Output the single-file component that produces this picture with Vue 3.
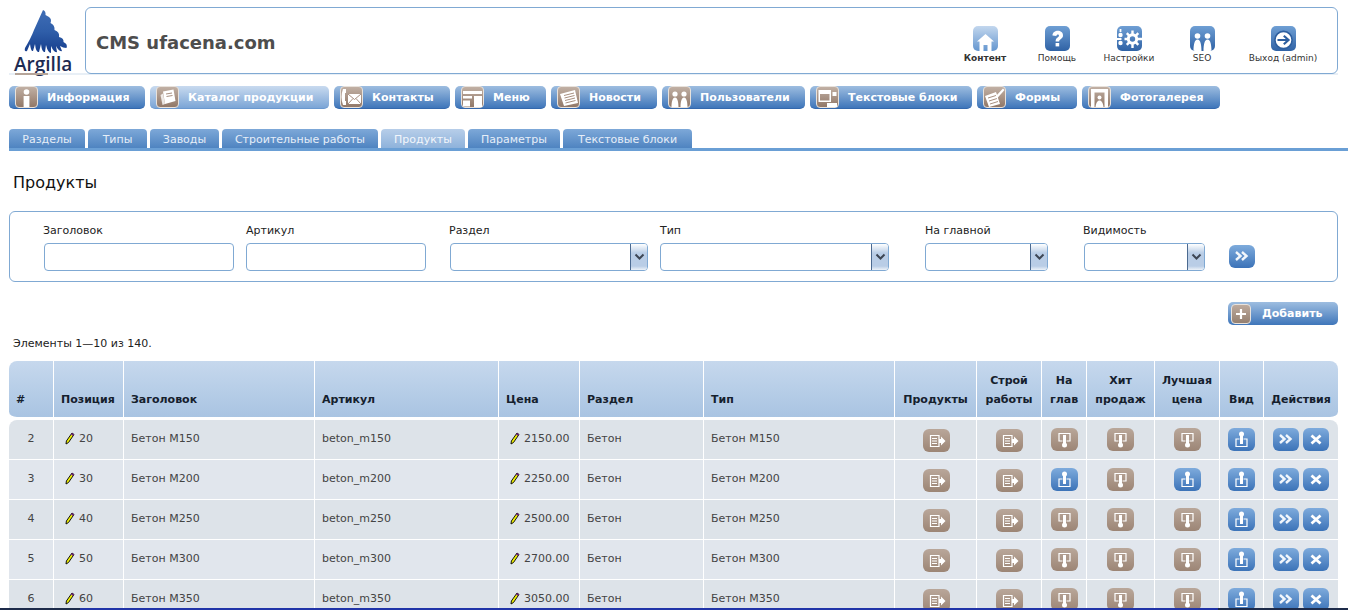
<script setup>
const topLinks = [
  { label: 'Контент', icon: 'home', w: 72, active: true },
  { label: 'Помощь', icon: 'help', w: 72 },
  { label: 'Настройки', icon: 'gears', w: 72 },
  { label: 'SEO', icon: 'users', w: 74 },
  { label: 'Выход (admin)', icon: 'exit', w: 88 }
]

const menu = [
  { label: 'Информация', icon: 'm-info', w: 136 },
  { label: 'Каталог продукции', icon: 'm-catalog', w: 179, active: true },
  { label: 'Контакты', icon: 'm-contacts', w: 116 },
  { label: 'Меню', icon: 'm-menu', w: 91 },
  { label: 'Новости', icon: 'm-news', w: 106 },
  { label: 'Пользователи', icon: 'm-users', w: 143 },
  { label: 'Текстовые блоки', icon: 'm-blocks', w: 162 },
  { label: 'Формы', icon: 'm-forms', w: 100 },
  { label: 'Фотогалерея', icon: 'm-gallery', w: 138 }
]

const tabs = [
  { label: 'Разделы', w: 76 },
  { label: 'Типы', w: 59 },
  { label: 'Заводы', w: 69 },
  { label: 'Строительные работы', w: 156 },
  { label: 'Продукты', w: 84, active: true },
  { label: 'Параметры', w: 92 },
  { label: 'Текстовые блоки', w: 129 }
]

const filters = [
  { label: 'Заголовок', w: 190, gap: 12 },
  { label: 'Артикул', w: 180, gap: 24 },
  { label: 'Раздел', w: 198, gap: 12, select: true },
  { label: 'Тип', w: 229, gap: 36, select: true },
  { label: 'На главной', w: 123, gap: 36, select: true },
  { label: 'Видимость', w: 121, gap: 24, select: true }
]

const rows = [
  { id: 2, pos: 20, title: 'Бетон М150', sku: 'beton_m150', price: '2150.00', type: 'Бетон М150', main: false, hit: false, best: false },
  { id: 3, pos: 30, title: 'Бетон М200', sku: 'beton_m200', price: '2250.00', type: 'Бетон М200', main: true, hit: false, best: true },
  { id: 4, pos: 40, title: 'Бетон М250', sku: 'beton_m250', price: '2500.00', type: 'Бетон М250', main: false, hit: false, best: false },
  { id: 5, pos: 50, title: 'Бетон М300', sku: 'beton_m300', price: '2700.00', type: 'Бетон М300', main: false, hit: false, best: false },
  { id: 6, pos: 60, title: 'Бетон М350', sku: 'beton_m350', price: '3050.00', type: 'Бетон М350', main: false, hit: false, best: false }
]
</script>

<template>
  <div class="page">
    <svg class="defs" width="0" height="0">
      <defs>
        <symbol id="home" viewBox="0 0 25 25">
          <path d="M12.5 8 L21 15.5 H18.5 V25 H14.5 V19 H10.5 V25 H6.5 V15.5 H4 Z" fill="#fff" />
        </symbol>
        <symbol id="help" viewBox="0 0 25 25">
          <path d="M7.5 9.5 C7.5 3.5 18 3 18 9.5 C18 13.2 14.2 12.8 14.2 15.5 H10.6 C10.6 11.5 14 11.8 14 9.6 C14 8 11.5 8 11.4 10 Z" fill="#fff" />
          <rect x="10.6" y="17" width="3.6" height="3.4" fill="#fff" />
        </symbol>
        <symbol id="gears" viewBox="0 0 25 25">
          <circle cx="15.5" cy="13" r="4.2" fill="none" stroke="#fff" stroke-width="3" />
          <path d="M15.5 4.5 V8 M15.5 18 V22 M7.5 13 H11 M20 13 H25 M9.8 7.2 L12.3 9.8 M18.7 16.2 L21.3 18.8 M21.3 7.2 L18.7 9.8 M12.3 16.2 L9.8 18.8" stroke="#fff" stroke-width="2.4" />
          <circle cx="3.5" cy="9" r="2.2" fill="#fff" />
          <circle cx="3.5" cy="17" r="2.2" fill="#fff" />
          <path d="M0 13 H4.5 M3.5 3 V6" stroke="#fff" stroke-width="1.8" />
        </symbol>
        <symbol id="users" viewBox="0 0 25 25">
          <circle cx="7.5" cy="10" r="2.8" fill="#fff" />
          <circle cx="17.5" cy="10" r="2.8" fill="#fff" />
          <path d="M7.5 13.5 C10.5 13.5 11.5 19 11.5 25 H3.5 C3.5 19 4.5 13.5 7.5 13.5 Z M17.5 13.5 C20.5 13.5 21.5 19 21.5 25 H13.5 C13.5 19 14.5 13.5 17.5 13.5 Z" fill="#fff" />
        </symbol>
        <symbol id="exit" viewBox="0 0 25 25">
          <circle cx="12.5" cy="14" r="8.6" fill="#fff" stroke="#2e5f9f" stroke-width="1.6" />
          <path d="M6.5 14 H16.5 M12.8 9.8 L17.5 14 L12.8 18.2" fill="none" stroke="#2e5f9f" stroke-width="2.2" />
        </symbol>

        <symbol id="m-info" viewBox="0 0 23 22">
          <circle cx="11.5" cy="6" r="2.8" fill="#fff" />
          <rect x="8.6" y="10" width="5.8" height="11" fill="#fff" />
        </symbol>
        <symbol id="m-catalog" viewBox="0 0 23 22">
          <path d="M7 5.5 L17.5 3.5 L19.5 15 L9 18 Z" fill="#fff" />
          <path d="M4.5 9 L7 7.5 L9 18 L6.5 19 Z" fill="#fff" opacity=".8" />
          <path d="M10 8 L16 7 M10.5 10.5 L16.5 9.5" stroke="#a78f80" />
        </symbol>
        <symbol id="m-contacts" viewBox="0 0 23 22">
          <path d="M3 3 H6 V7 H5 V15 H6 V19 H3 C1 14 1 8 3 3 Z" fill="#fff" />
          <rect x="8" y="8" width="13" height="10" fill="#fff" />
          <path d="M8 8 L14.5 13.5 L21 8 M8 18 L13 12.5 M21 18 L16 12.5" stroke="#a78f80" fill="none" />
        </symbol>
        <symbol id="m-menu" viewBox="0 0 23 22">
          <rect x="2" y="5" width="19" height="3" fill="#fff" />
          <rect x="2" y="10" width="9" height="2.5" fill="#fff" />
          <rect x="2" y="14.5" width="7" height="6" fill="#fff" />
          <rect x="13" y="10" width="8" height="11" fill="#fff" />
        </symbol>
        <symbol id="m-news" viewBox="0 0 23 22">
          <path d="M3 8 L18 4 L21 17 L7 20 Z" fill="#fff" />
          <path d="M7 9.5 L17 7 M7.5 12 L17.5 9.5 M8 14.5 L18 12 M8.5 17 L18.5 14.5" stroke="#a78f80" />
        </symbol>
        <symbol id="m-users" viewBox="0 0 23 22">
          <circle cx="7" cy="8" r="2.6" fill="#fff" />
          <circle cx="16" cy="8" r="2.6" fill="#fff" />
          <path d="M7 11.5 C9.5 11.5 10.5 16 10.5 21 H3.5 C3.5 16 4.5 11.5 7 11.5 Z M16 11.5 C18.5 11.5 19.5 16 19.5 21 H12.5 C12.5 16 13.5 11.5 16 11.5 Z" fill="#fff" />
        </symbol>
        <symbol id="m-blocks" viewBox="0 0 23 22">
          <path d="M2.5 4 H15 V16 H2.5 Z M4 8 V14.5 H13.5 V8 Z" fill="#fff" fill-rule="evenodd" />
          <rect x="16.5" y="6" width="4" height="4" fill="#fff" />
          <rect x="11" y="17" width="10" height="4" fill="#fff" />
        </symbol>
        <symbol id="m-forms" viewBox="0 0 23 22">
          <path d="M2 10 L13 6 L17 18 L6 21 Z" fill="#fff" />
          <path d="M5 12 L13 9.5 M6 15 L14 12.5 M7 18 L15 15.5" stroke="#a78f80" />
          <path d="M12 11 L20 2.5 L21.5 4 L14 12.5 Z" fill="#fff" />
        </symbol>
        <symbol id="m-gallery" viewBox="0 0 23 22">
          <path d="M3 3 H20 V21 H16.5 V6.5 H6.5 V21 H3 Z" fill="#fff" />
          <circle cx="11.5" cy="11.5" r="2" fill="#fff" />
          <path d="M7.5 21 C8 16 10 14.5 11.5 14.5 C13 14.5 15 16 15.5 21 Z" fill="#fff" />
        </symbol>

        <symbol id="doc" viewBox="0 0 27 23">
          <path d="M7.5 6.5 H16 V17.5 H7.5 Z" fill="none" stroke="#fff" stroke-width="1.2" />
          <path d="M9 9.5 H14 M9 12 H14 M9 14.5 H14" stroke="#fff" stroke-width="1" />
          <path d="M16 10 H18 V7.5 L22.5 12 L18 16.5 V14 H16 Z" fill="#fff" />
        </symbol>
        <symbol id="off" viewBox="0 0 27 23">
          <path d="M11.5 13 H8 V5.5 H19 V13 H15.5" fill="none" stroke="#fff" stroke-width="1.2" />
          <rect x="12" y="7" width="3" height="9" fill="#fff" />
          <circle cx="13.5" cy="17" r="2.5" fill="#fff" />
        </symbol>
        <symbol id="on" viewBox="0 0 27 23">
          <path d="M11.5 11 H8 V18.5 H19 V11 H15.5" fill="none" stroke="#fff" stroke-width="1.2" />
          <rect x="12" y="7" width="3" height="9" fill="#fff" />
          <circle cx="13.5" cy="6" r="2.5" fill="#fff" />
        </symbol>
        <symbol id="next" viewBox="0 0 26 23">
          <path d="M7 7 L11.5 11 L7 15 M13 7 L17.5 11 L13 15" fill="none" stroke="#fff" stroke-width="2.4" opacity=".92" />
        </symbol>
        <symbol id="del" viewBox="0 0 26 23">
          <path d="M8.5 7.5 L17.5 15.5 M17.5 7.5 L8.5 15.5" stroke="#fff" stroke-width="2.8" />
        </symbol>
        <symbol id="pencil" viewBox="0 0 10 13">
          <path d="M7 1 L9 2.5 L3.5 10.5 L1 12 L1.4 9 Z" fill="#eeee00" stroke="#111" stroke-width="1" />
          <path d="M7 1 L9 2.5 L8 4 L6 2.5 Z" fill="#6d1f80" />
        </symbol>
      </defs>
    </svg>

    <header class="head">
      <div class="logo">
        <svg class="logo-mark" width="52" height="44" viewBox="0 0 52 44">
          <defs>
            <linearGradient id="logoFill" x1="0" y1="0" x2="0" y2="1">
              <stop offset="0" stop-color="#3f6db5" />
              <stop offset=".5" stop-color="#2f5ea9" />
              <stop offset="1" stop-color="#163d8c" />
            </linearGradient>
          </defs>
          <path d="M27 0 Q30 1 29.5 5 L33 7 Q36 9 34.5 13 Q39 15 38.5 20 Q44 22 43 27 Q48 28 47.5 32 Q52 34 50.5 38 Q47 38 44 36 L46 41 Q43 42 40 36 L41 42 Q38 43 35 36 L35 43 Q32 43 30 35 L29 42 Q26 43 25 34 L23 42 Q20 43 19 34 L17 41 Q15 42 14 34 L11 41 Q8 42 9 38 Q15 28 18 20 Z" fill="url(#logoFill)" />
        </svg>
        <span class="logo-text">Argilla</span>
        <i class="logo-strip"></i>
      </div>
      <div class="head-box">
        <div class="site-name">CMS ufacena.com</div>
        <nav class="top-nav">
          <a v-for="l in topLinks" :key="l.label" class="top-link" :class="{ active: l.active }" :style="{ width: l.w + 'px' }">
            <span class="top-icon"><svg width="25" height="25"><use :href="'#' + l.icon" /></svg></span>
            <span>{{ l.label }}</span>
          </a>
        </nav>
      </div>
    </header>

    <nav class="menu">
      <a v-for="m in menu" :key="m.label" class="menu-btn" :class="{ active: m.active }" :style="{ width: m.w + 'px' }">
        <span class="tile"><svg width="23" height="22"><use :href="'#' + m.icon" /></svg></span>
        <span>{{ m.label }}</span>
      </a>
    </nav>

    <nav class="tabs">
      <a v-for="t in tabs" :key="t.label" class="tab" :class="{ active: t.active }" :style="{ width: t.w + 'px' }">{{ t.label }}</a>
    </nav>

    <h1 class="title">Продукты</h1>

    <form class="filter">
      <label v-for="f in filters" :key="f.label" class="field" :style="{ width: f.w + 'px', marginRight: f.gap + 'px' }">
        <span class="field-label">{{ f.label }}</span>
        <span v-if="f.select" class="select">
          <span class="select-arrow">
            <svg width="11" height="8" viewBox="0 0 11 8"><path d="M1.5 1.5 L5.5 5.5 L9.5 1.5" fill="none" stroke="#3d4654" stroke-width="2" /></svg>
          </span>
        </span>
        <input v-else class="input" type="text" />
      </label>
      <a class="btn blue go"><svg width="26" height="23"><use href="#next" /></svg></a>
    </form>

    <div class="add-row">
      <a class="add-btn">
        <span class="add-tile">
          <svg width="14" height="14" viewBox="0 0 14 14"><path d="M7 2 V12 M2 7 H12" stroke="#fff" stroke-width="2.2" /></svg>
        </span>
        <span>Добавить</span>
      </a>
    </div>

    <p class="count">Элементы 1—10 из 140.</p>

    <table class="grid">
      <colgroup>
        <col style="width: 45px" /><col style="width: 70px" /><col style="width: 191px" /><col style="width: 184px" />
        <col style="width: 81px" /><col style="width: 124px" /><col style="width: 191px" /><col style="width: 82px" />
        <col style="width: 65px" /><col style="width: 45px" /><col style="width: 68px" /><col style="width: 65px" />
        <col style="width: 44px" /><col style="width: 74px" />
      </colgroup>
      <thead>
        <tr>
          <th>#</th>
          <th>Позиция</th>
          <th>Заголовок</th>
          <th>Артикул</th>
          <th>Цена</th>
          <th>Раздел</th>
          <th>Тип</th>
          <th class="mid">Продукты</th>
          <th class="mid">Строй<br />работы</th>
          <th class="mid">На<br />глав</th>
          <th class="mid">Хит<br />продаж</th>
          <th class="mid">Лучшая<br />цена</th>
          <th class="mid">Вид</th>
          <th class="mid">Действия</th>
        </tr>
      </thead>
      <tbody>
        <tr v-for="r in rows" :key="r.id">
          <td class="num">{{ r.id }}</td>
          <td class="edit"><svg width="10" height="13"><use href="#pencil" /></svg>{{ r.pos }}</td>
          <td>{{ r.title }}</td>
          <td>{{ r.sku }}</td>
          <td class="edit"><svg width="10" height="13"><use href="#pencil" /></svg>{{ r.price }}</td>
          <td>Бетон</td>
          <td>{{ r.type }}</td>
          <td class="mid shift"><a class="btn brown low"><svg width="27" height="23"><use href="#doc" /></svg></a></td>
          <td class="mid"><a class="btn brown low"><svg width="27" height="23"><use href="#doc" /></svg></a></td>
          <td class="mid"><a class="btn" :class="r.main ? 'blue' : 'brown'"><svg width="27" height="23"><use :href="r.main ? '#on' : '#off'" /></svg></a></td>
          <td class="mid"><a class="btn" :class="r.hit ? 'blue' : 'brown'"><svg width="27" height="23"><use :href="r.hit ? '#on' : '#off'" /></svg></a></td>
          <td class="mid"><a class="btn" :class="r.best ? 'blue' : 'brown'"><svg width="27" height="23"><use :href="r.best ? '#on' : '#off'" /></svg></a></td>
          <td class="mid"><a class="btn blue"><svg width="27" height="23"><use href="#on" /></svg></a></td>
          <td class="mid actions">
            <a class="btn blue small"><svg width="26" height="23"><use href="#next" /></svg></a>
            <a class="btn blue small"><svg width="26" height="23"><use href="#del" /></svg></a>
          </td>
        </tr>
      </tbody>
    </table>

    <div class="edge"></div>
  </div>
</template>

<style scoped>
.page {
  position: relative;
  height: 610px;
  overflow: hidden;
  background: #fff;
  font-family: "DejaVu Sans", Verdana, sans-serif;
  font-size: 11px;
  color: #333;
}

.defs {
  position: absolute;
}

.head {
  display: flex;
  height: 75px;
  margin: 0 10px 0 9px;
  box-sizing: border-box;
  padding-top: 7px;
  border-bottom: 2px solid #e8eff6;
}

.logo {
  position: relative;
  width: 76px;
  flex: none;
}

.logo-mark {
  position: absolute;
  left: 7px;
  top: 3px;
}

.logo-text {
  position: absolute;
  left: 5px;
  top: 45px;
  font-family: "Open Sans", Arial, sans-serif;
  font-size: 19px;
  font-weight: 600;
  line-height: 24px;
  color: #1d2b52;
}

.logo-strip {
  position: absolute;
  left: 6px;
  top: 66px;
  width: 33px;
  height: 2px;
  background: #b5a498;
}

.head-box {
  flex: 1;
  height: 67px;
  box-sizing: border-box;
  display: flex;
  align-items: flex-start;
  justify-content: space-between;
  border: 1px solid #80a9d3;
  border-radius: 6px;
  padding: 0 10px 0 10px;
}

.site-name {
  margin-top: 23px;
  font-size: 18px;
  line-height: 24px;
  font-weight: 700;
  color: #4d4d4d;
}

.top-nav {
  display: flex;
  padding-top: 18px;
}

.top-link {
  display: flex;
  flex-direction: column;
  align-items: center;
  font-size: 9px;
  line-height: 12px;
  color: #333;
  white-space: nowrap;
}

.top-link.active {
  font-weight: 700;
}

.top-icon {
  width: 25px;
  height: 25px;
  margin-bottom: 1px;
  border-radius: 5px;
  overflow: hidden;
  background: linear-gradient(#6f9fd4, #2f62a5);
}

.active .top-icon {
  background: linear-gradient(#c3d7ee, #6496cf);
}

.top-icon svg {
  display: block;
}

.menu {
  display: flex;
  gap: 5px;
  margin: 11px 0 0 9px;
}

.menu-btn {
  display: flex;
  align-items: center;
  box-sizing: border-box;
  height: 23px;
  padding-left: 6px;
  gap: 9px;
  border-radius: 5px;
  background: linear-gradient(#9dbde0, #3f76ba);
  border-bottom: 1px solid #3468ad;
  font-size: 11px;
  font-weight: 700;
  color: #fff;
  white-space: nowrap;
}

.menu-btn.active {
  background: linear-gradient(#c8daef, #7ba5d6);
  border-bottom-color: #6a98cf;
}

.tile {
  width: 23px;
  height: 22px;
  box-sizing: border-box;
  border: 1px solid #e8e2dc;
  border-radius: 4px;
  background: linear-gradient(#c1b0a4, #917868);
  flex: none;
}

.tile svg {
  display: block;
  margin: -1px;
}

.tabs {
  display: flex;
  gap: 3px;
  margin: 20px 0 0 9px;
  padding-right: 0;
  border-bottom: 3px solid #6a9fd5;
}

.tab {
  height: 19px;
  line-height: 21px;
  text-align: center;
  border-radius: 4px 4px 0 0;
  background: linear-gradient(#7da8d8, #4f84c1);
  color: #e6eef8;
  font-size: 11px;
  white-space: nowrap;
}

.tab.active {
  background: linear-gradient(#b7cee9, #8eb2db);
  color: #f2f6fb;
}

.title {
  margin: 23px 0 0 13px;
  font-size: 16px;
  line-height: 18px;
  font-weight: 400;
  color: #111;
}

.filter {
  display: flex;
  align-items: flex-start;
  box-sizing: border-box;
  height: 71px;
  margin: 19px 10px 0 9px;
  padding: 11px 0 0 34px;
  border: 1px solid #80a9d3;
  border-radius: 6px;
}

.field {
  display: block;
}

.field-label {
  display: block;
  height: 20px;
  margin-left: -1px;
  line-height: 16px;
  font-size: 11px;
  color: #222;
}

.field:nth-child(2) .field-label,
.field:nth-child(4) .field-label,
.field:nth-child(5) .field-label {
  margin-left: 0;
}

.input,
.select {
  display: flex;
  justify-content: flex-end;
  box-sizing: border-box;
  width: 100%;
  height: 28px;
  margin: 0;
  padding: 0;
  border: 1px solid #80a9d3;
  border-radius: 4px;
  background: #fff;
  outline: none;
}

.select-arrow {
  display: flex;
  align-items: center;
  justify-content: center;
  width: 16px;
  border-left: 1px solid #4c6a90;
  border-radius: 0 3px 3px 0;
  background: linear-gradient(#fff, #b9cde6 35%, #b9cde6 85%, #eef3f9);
}

.btn {
  display: inline-block;
  vertical-align: top;
  width: 27px;
  height: 23px;
  border-radius: 6px;
}

.btn svg {
  display: block;
}

.btn.small,
.go {
  width: 26px;
}

.go {
  margin-top: 22px;
  margin-left: 0;
}

.blue {
  background: linear-gradient(#7eabdc, #3c73b8);
}

.brown {
  background: linear-gradient(#b9a79a, #9c8575);
}

.add-row {
  display: flex;
  justify-content: flex-end;
  margin: 20px 10px 0 0;
}

.add-btn {
  display: flex;
  align-items: center;
  box-sizing: border-box;
  width: 110px;
  height: 23px;
  padding-left: 3px;
  gap: 11px;
  border-radius: 5px;
  background: linear-gradient(#9dbde0, #3f76ba);
  font-size: 11px;
  font-weight: 700;
  color: #fff;
}

.add-tile {
  display: flex;
  align-items: center;
  justify-content: center;
  box-sizing: border-box;
  width: 20px;
  height: 20px;
  border: 1px solid #e8e2dc;
  border-radius: 4px;
  background: linear-gradient(#bdaa9d, #958070);
}

.count {
  margin: 12px 0 0 13px;
  font-size: 11px;
  line-height: 14px;
  color: #222;
}

.grid {
  table-layout: fixed;
  width: 1329px;
  margin: 10px 0 0 9px;
  border-collapse: separate;
  border-spacing: 0;
}

.grid th {
  height: 48px;
  box-sizing: content-box;
  padding: 0 0 8px 7px;
  vertical-align: bottom;
  text-align: left;
  border-right: 1px solid #fff;
  border-bottom: 3px solid #fff;
  background: linear-gradient(#c6d8ed, #a9c4e2);
  font-size: 11px;
  line-height: 19px;
  font-weight: 700;
  color: #15202d;
  white-space: nowrap;
}

.grid th:first-child {
  border-radius: 8px 0 0 8px;
}

.grid th:last-child {
  border-radius: 0 8px 8px 0;
  border-right: 0;
}

.grid th.mid,
.grid td.mid {
  padding-left: 0;
  text-align: center;
}

.grid td {
  height: 39px;
  padding: 0 0 2px 7px;
  box-sizing: border-box;
  border-right: 1px solid #fff;
  border-bottom: 1px solid #fff;
  background: #e1e6ed;
  line-height: 14px;
  color: #444;
  white-space: nowrap;
}

.grid tbody tr {
  height: 40px;
}

.grid tbody tr:nth-child(odd) td {
  background: #dde3e9;
}

.grid tbody tr:first-child td:first-child {
  border-top-left-radius: 8px;
}

.grid tbody tr:first-child td:last-child {
  border-top-right-radius: 8px;
}

.grid td:last-child {
  border-right: 0;
}

.grid td.num {
  padding-left: 0;
  padding-right: 0;
  text-align: center;
}

.grid td.edit svg {
  vertical-align: -3px;
  margin: 0 4px 0 4px;
}

.grid td.mid .btn {
  margin-top: 2px;
}

.grid td.mid .btn.low {
  margin-top: 3px;
}

.grid td.shift {
  padding-left: 2px;
}

.actions {
  font-size: 0;
}

.actions .btn + .btn {
  margin-left: 4px;
}

.edge {
  position: absolute;
  left: 0;
  right: 0;
  top: 608px;
  height: 2px;
  background: linear-gradient(90deg, #1d2b4a 80px, #2034a8 80px, #2034a8 1218px, #1d2b4a 1218px);
}
</style>

<style>
html,
body {
  margin: 0;
  overflow: hidden;
}
a {
  text-decoration: none;
}
</style>
